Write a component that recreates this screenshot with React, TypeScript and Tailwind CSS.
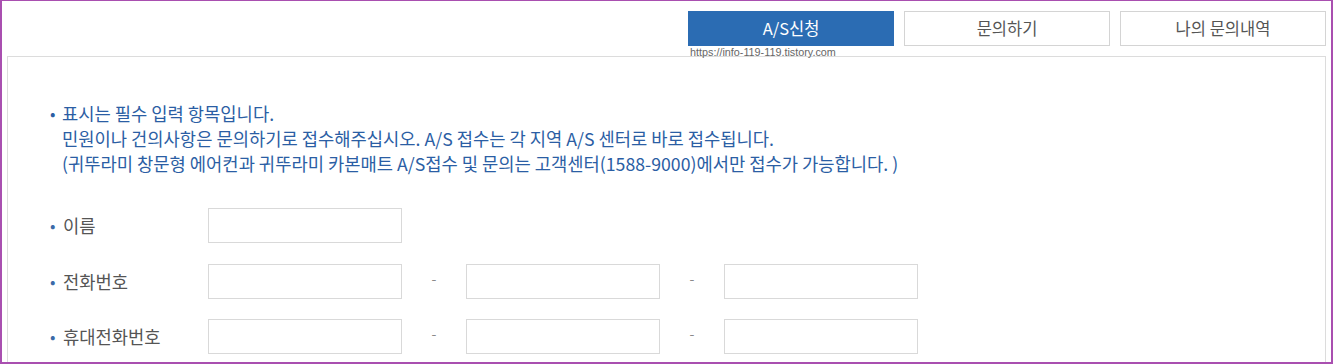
import React from "react";

const tabs = [
  { label: "A/S신청", active: true },
  { label: "문의하기", active: false },
  { label: "나의 문의내역", active: false },
];

function PhoneInputs({ count }: { count: number }) {
  return (
    <div className="flex items-center">
      {Array.from({ length: count }).map((_, i) => (
        <React.Fragment key={i}>
          {i > 0 && (
            <span className="w-[64px] text-center text-[14px] text-[#8a8a8a] -mt-[6px]">-</span>
          )}
          <input
            type="text"
            className="w-[194px] h-[35px] border border-[#d9d9d9] bg-white outline-none"
          />
        </React.Fragment>
      ))}
    </div>
  );
}

function FieldRow({ label, count }: { label: string; count: number }) {
  return (
    <div className="flex items-center h-[35px]">
      <div className="w-[158px] flex items-center text-[17.7px] text-[#555]">
        <span className="w-[13px] text-[#3b6aa8] text-[16px]">•</span>
        <span>{label}</span>
      </div>
      <PhoneInputs count={count} />
    </div>
  );
}

export default function App() {
  return (
    <div
      className="relative w-[1333px] h-[364px] overflow-hidden bg-white border-t border-l-2 border-r-2 border-b-2 border-[#a94fb0]"
      style={{ fontFamily: '"Noto Sans CJK KR", "Noto Sans", sans-serif' }}
    >
      {/* Tabs */}
      <div className="flex justify-end gap-[10px] pt-[10px] pr-[5px]">
        {tabs.map((t) => (
          <button
            key={t.label}
            className={
              t.active
                ? "w-[206px] h-[35px] bg-[#2b6cb3] text-white text-[16.5px]"
                : "w-[206px] h-[35px] border border-[#d4d4d4] bg-white text-[#555] text-[16.5px]"
            }
          >
            {t.label}
          </button>
        ))}
      </div>

      {/* watermark */}
      <span
        className="absolute left-[688px] top-[45px] text-[10.8px] text-[#666] leading-[12px]"
        style={{ fontFamily: '"Liberation Sans", Arial, sans-serif' }}
      >
        https://info-119-119.tistory.com
      </span>

      {/* Content box */}
      <div className="ml-[5px] mr-[5px] mt-[10px] h-[400px] border border-[#dcdcdc] pt-[44px] pl-[42px]">
        <div className="text-[17.7px] leading-[25px] text-[#2b5ea4]">
          <p className="flex">
            <span className="w-[12px] text-[16px]">•</span>
            <span>표시는 필수 입력 항목입니다.</span>
          </p>
          <p className="pl-[12px]">
            민원이나 건의사항은 문의하기로 접수해주십시오. A/S 접수는 각 지역 A/S 센터로 바로 접수됩니다.
          </p>
          <p className="pl-[12px]">
            (귀뚜라미 창문형 에어컨과 귀뚜라미 카본매트 A/S접수 및 문의는 고객센터(1588-9000)에서만 접수가 가능합니다. )
          </p>
        </div>

        <div className="mt-[32px] flex flex-col gap-[20.5px]">
          <FieldRow label="이름" count={1} />
          <FieldRow label="전화번호" count={3} />
          <FieldRow label="휴대전화번호" count={3} />
        </div>
      </div>
    </div>
  );
}
